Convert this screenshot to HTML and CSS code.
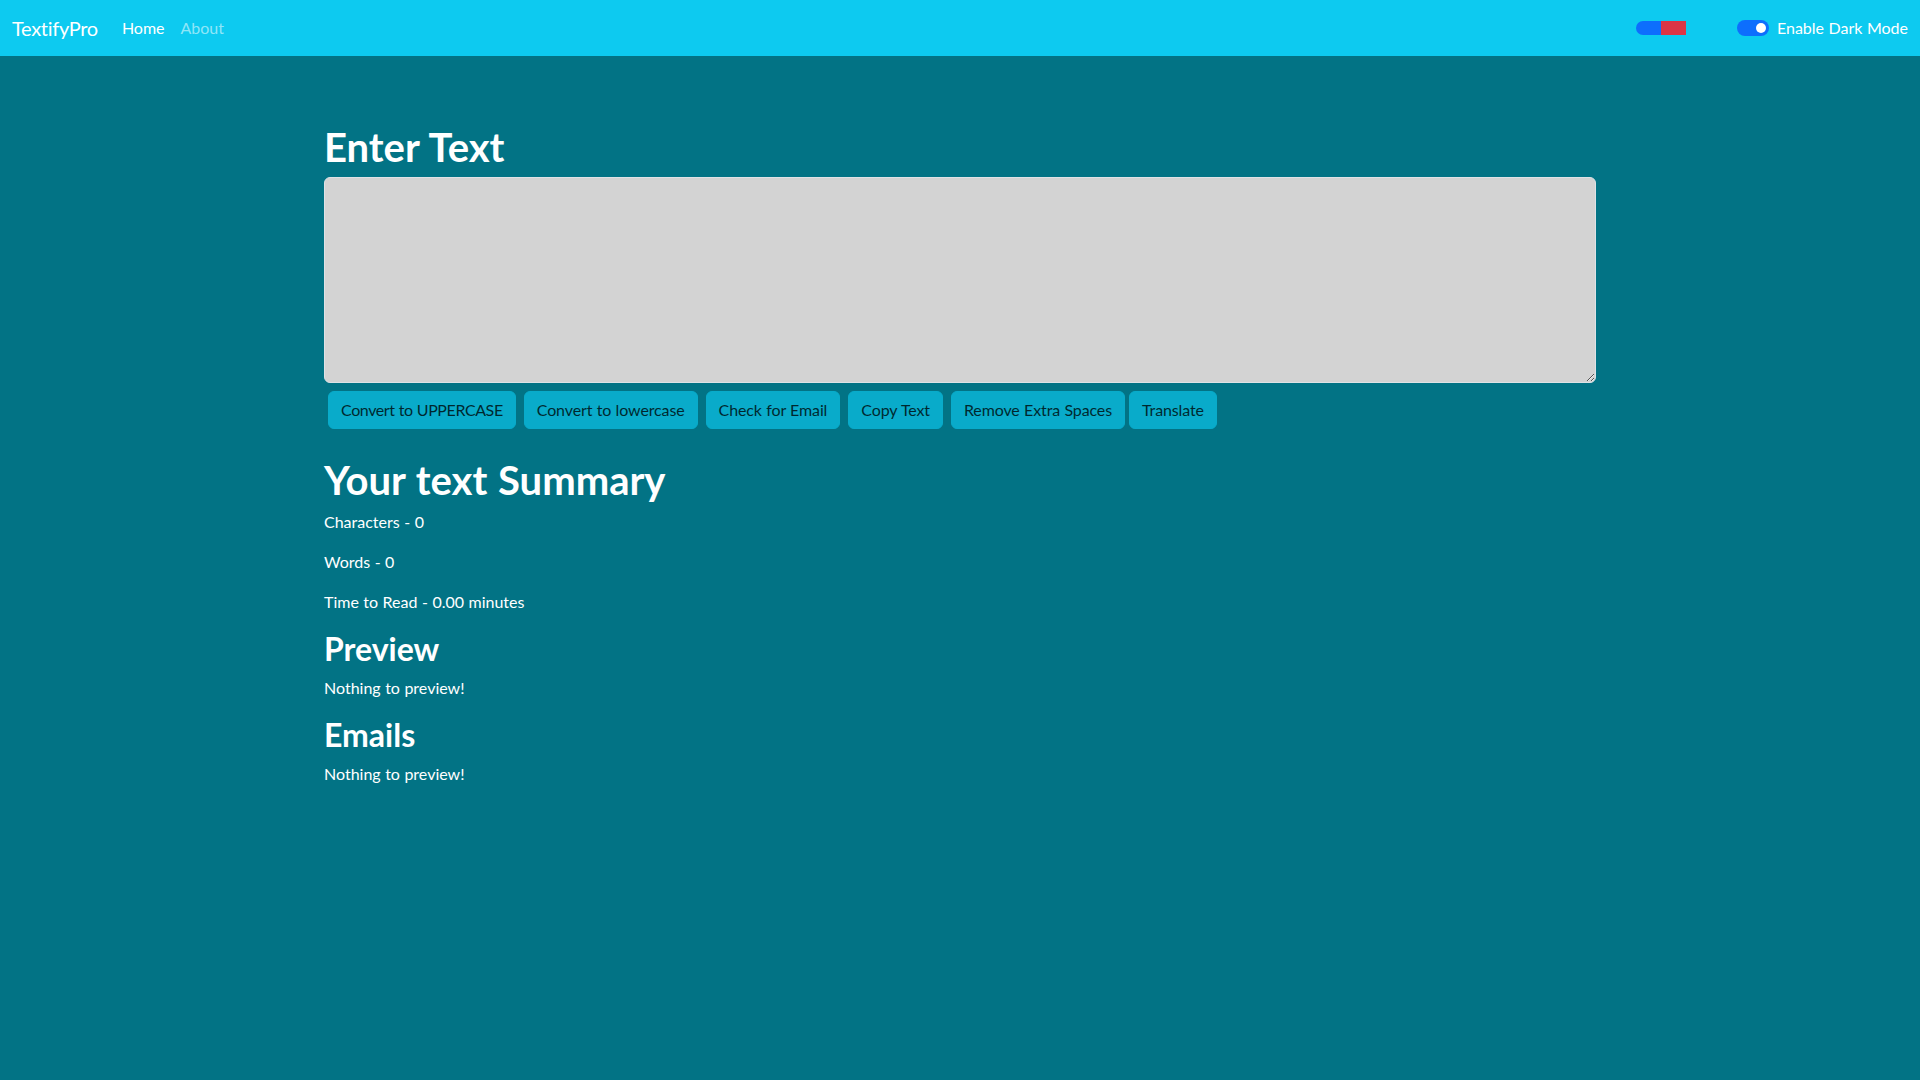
FILE: index.html
```html
<!DOCTYPE html>
<html lang="en">
<head>
<meta charset="utf-8">
<title>TextifyPro</title>
<link rel="stylesheet" href="styles.css">
</head>
<body>
<nav class="navbar">
  <a class="brand" href="#">TextifyPro</a>
  <ul class="nav-links">
    <li><a class="nav-link active" href="#">Home</a></li>
    <li><a class="nav-link" href="#">About</a></li>
  </ul>
  <div class="nav-right">
    <div class="palette">
      <span class="swatch swatch-blue"></span>
      <span class="swatch swatch-red"></span>
    </div>
    <label class="switch-wrap">
      <span class="switch"><span class="knob"></span></span>
      <span class="switch-label">Enable Dark Mode</span>
    </label>
  </div>
</nav>

<main class="container">
  <section class="editor">
    <h1 class="title">Enter Text</h1>
    <textarea class="textbox" rows="8"></textarea>
    <div class="actions">
      <button class="btn btn-caps" disabled>Convert to UPPERCASE</button>
      <button class="btn" disabled>Convert to lowercase</button>
      <button class="btn" disabled>Check for Email</button>
      <button class="btn" disabled>Copy Text</button>
      <button class="btn" disabled>Remove Extra Spaces</button>
      <button class="btn btn-last" disabled>Translate</button>
    </div>
  </section>

  <section class="summary">
    <h1 class="title">Your text Summary</h1>
    <p class="stat">Characters - 0</p>
    <p class="stat">Words - 0</p>
    <p class="stat">Time to Read - 0.00 minutes</p>
    <h2 class="subtitle">Preview</h2>
    <p class="stat">Nothing to preview!</p>
    <h2 class="subtitle">Emails</h2>
    <p class="stat">Nothing to preview!</p>
  </section>
</main>
</body>
</html>
```
FILE: styles.css
```css
* { box-sizing: border-box; }
html, body { margin: 0; padding: 0; }
body {
  background: #027385;
  color: #fff;
  font-family: Lato, "Open Sans", sans-serif;
  font-size: 16px;
  line-height: 24px;
  word-spacing: 0.4px;
  min-height: 1080px;
}

.navbar {
  height: 56px;
  background: #0dcaf0;
  display: flex;
  align-items: center;
  padding: 0 12px;
}
.brand {
  color: #fff;
  text-decoration: none;
  font-size: 20px;
  line-height: 30px;
  letter-spacing: -0.3px;
  margin-right: 16px;
}
.nav-links {
  list-style: none;
  display: flex;
  margin: 0;
  padding: 0;
}
.nav-link {
  display: block;
  padding: 8px;
  color: rgba(255,255,255,0.55);
  text-decoration: none;
}
.nav-link.active { color: #fff; }
.nav-right {
  margin-left: auto;
  display: flex;
  align-items: center;
  gap: 51px;
}
.palette {
  display: flex;
  height: 14px;
}
.swatch { width: 25px; height: 14px; display: block; }
.swatch-blue { background: #0d6efd; border-radius: 7px 0 0 7px; }
.swatch-red { background: #dc3545; }
.switch-wrap {
  display: flex;
  align-items: center;
  gap: 8px;
  cursor: pointer;
}
.switch {
  width: 32px;
  height: 16px;
  border-radius: 8px;
  background: #0d6efd;
  position: relative;
  display: block;
}
.knob {
  position: absolute;
  right: 3px;
  top: 3px;
  width: 10px;
  height: 10px;
  border-radius: 50%;
  background: #fff;
}
.switch-label { color: #fff; }

.container {
  width: 1272px;
  margin: 0 auto;
  padding-top: 65px;
}
.title {
  font-size: 40px;
  line-height: 48px;
  font-weight: 700;
  padding-top: 2px;
  margin: 0 0 6px;
  word-spacing: 1px;
}
.textbox {
  display: block;
  width: 100%;
  height: 206px;
  background: #d3d3d3;
  border: 1px solid #dee2e6;
  border-radius: 6px;
  padding: 6px 12px;
  font: inherit;
  margin: 0;
}
.actions {
  display: flex;
  flex-wrap: wrap;
  padding-top: 8px;
}
.btn {
  font: inherit;
  word-spacing: 0.4px;
  letter-spacing: -0.12px;
  height: 38px;
  padding: 0 12px;
  margin: 0 4px;
  border: 1px solid #0dcaf0;
  border-radius: 6px;
  background: #0dcaf0;
  color: #000;
  opacity: 0.65;
}
.btn-caps { letter-spacing: -0.4px; }
.btn-last { margin-left: 0; }
.summary {
  padding-top: 25px;
}
.stat { margin: 0 0 16px; }
.subtitle {
  font-size: 32px;
  line-height: 38px;
  font-weight: 700;
  margin: 0 0 8px;
}
```
